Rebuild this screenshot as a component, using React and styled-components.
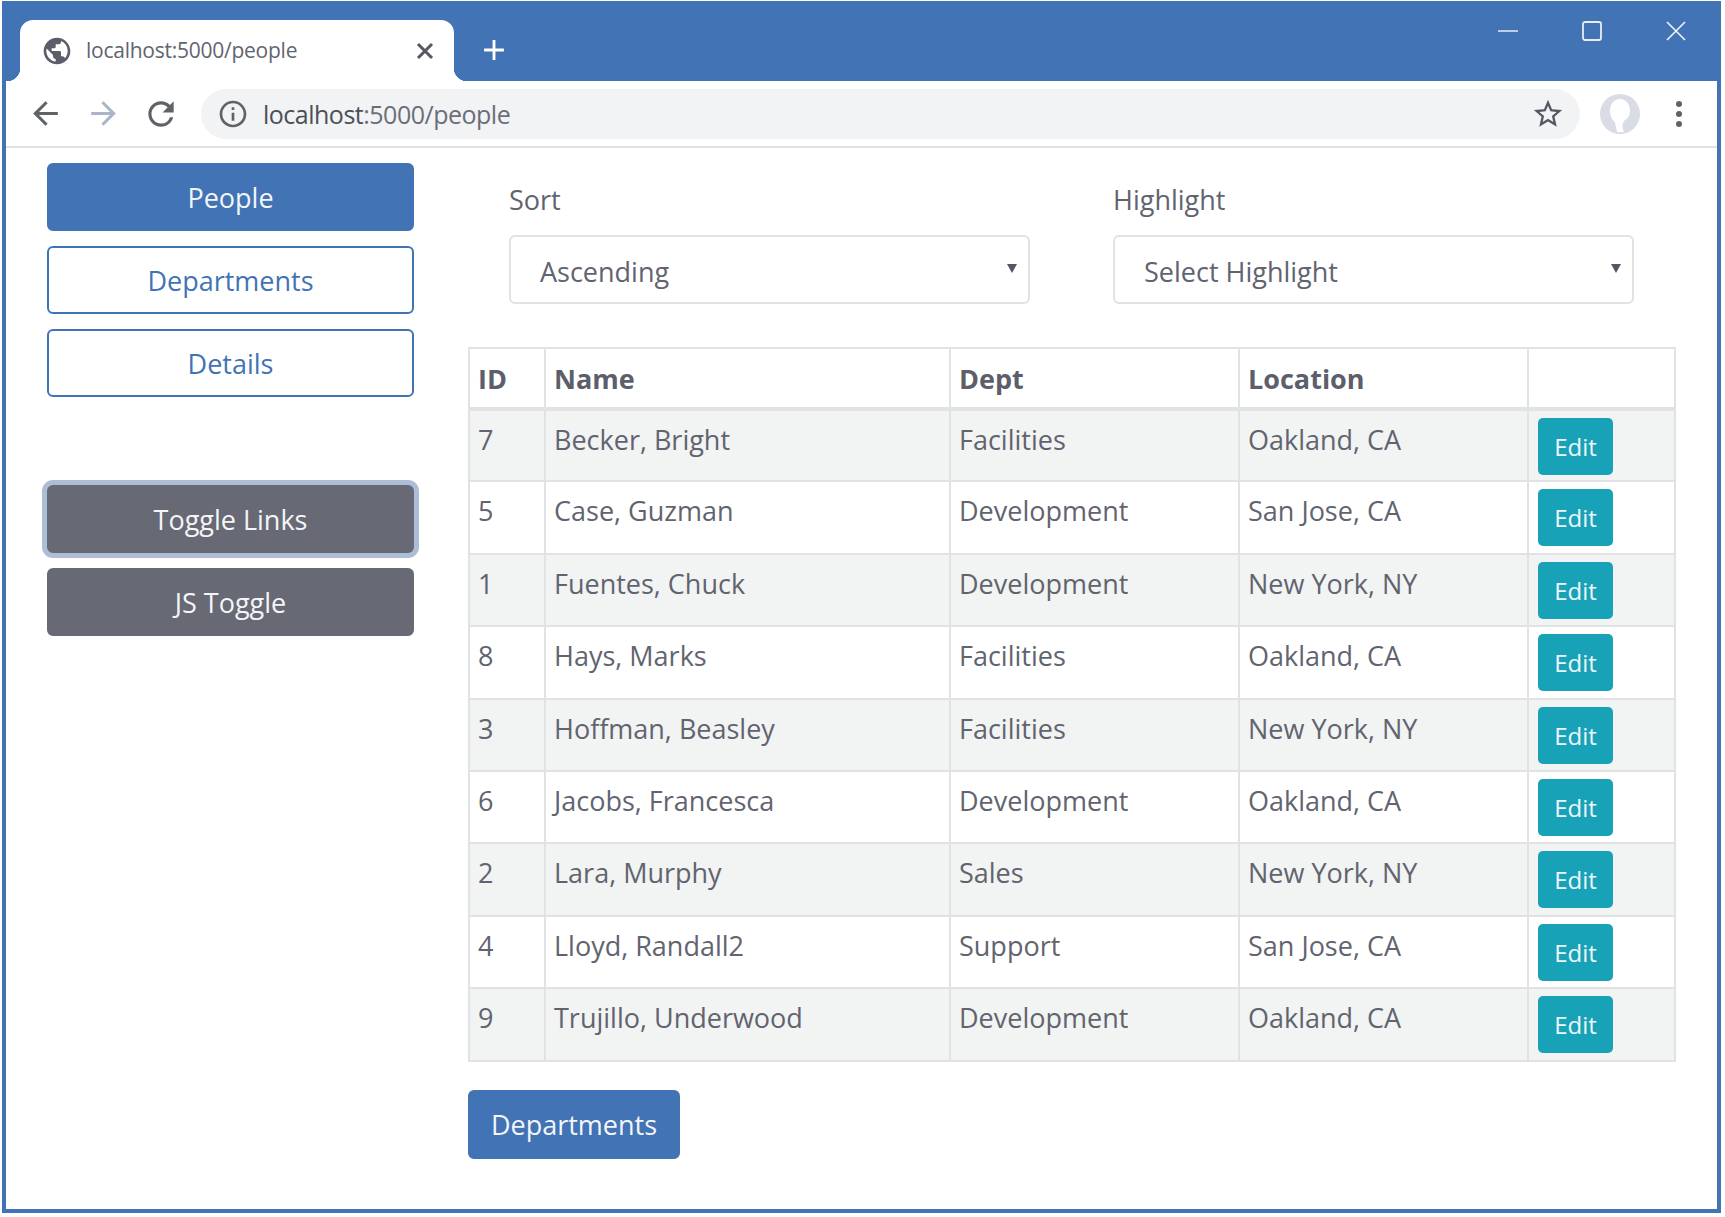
import React from "react";
import styled, { createGlobalStyle } from "styled-components";

const BLUE = "#4173b5";
const TEXT = "#61646f";
const LINE = "#e0e2e3";

const people = [
  { id: 7, name: "Becker, Bright", dept: "Facilities", location: "Oakland, CA" },
  { id: 5, name: "Case, Guzman", dept: "Development", location: "San Jose, CA" },
  { id: 1, name: "Fuentes, Chuck", dept: "Development", location: "New York, NY" },
  { id: 8, name: "Hays, Marks", dept: "Facilities", location: "Oakland, CA" },
  { id: 3, name: "Hoffman, Beasley", dept: "Facilities", location: "New York, NY" },
  { id: 6, name: "Jacobs, Francesca", dept: "Development", location: "Oakland, CA" },
  { id: 2, name: "Lara, Murphy", dept: "Sales", location: "New York, NY" },
  { id: 4, name: "Lloyd, Randall2", dept: "Support", location: "San Jose, CA" },
  { id: 9, name: "Trujillo, Underwood", dept: "Development", location: "Oakland, CA" },
];

const GlobalStyle = createGlobalStyle`
  html, body {
    margin: 0;
    padding: 0;
    background: #fff;
  }
  body {
    font-family: "Open Sans", "Liberation Sans", sans-serif;
    color: ${TEXT};
  }
`;

const Window = styled.div`
  box-sizing: border-box;
  width: 1719px;
  height: 1212px;
  margin: 1px 0 0 2px;
  border: 4px solid ${BLUE};
  display: flex;
  flex-direction: column;
  background: #fff;
`;

const TabBar = styled.div`
  height: 76px;
  flex: none;
  background: ${BLUE};
  display: flex;
  align-items: flex-start;
  padding: 15px 0 0 14px;
  box-sizing: border-box;
`;

const Tab = styled.div`
  position: relative;
  width: 434px;
  height: 61px;
  background: #fff;
  border-radius: 13px 13px 0 0;
  display: flex;
  align-items: center;
  box-sizing: border-box;
  padding: 0 19px 0 21px;
  font-size: 21px;
  letter-spacing: -0.25px;
  color: ${TEXT};

  &::before,
  &::after {
    content: "";
    position: absolute;
    bottom: 0;
    width: 13px;
    height: 13px;
  }
  &::before {
    left: -13px;
    background: radial-gradient(circle at 0 0, transparent 13px, #fff 13.5px);
  }
  &::after {
    right: -13px;
    background: radial-gradient(circle at 100% 0, transparent 13px, #fff 13.5px);
  }
`;

const TabTitle = styled.span`
  flex: 1;
  margin-left: 13px;
  margin-top: -1px;
  white-space: nowrap;
`;

const NewTab = styled.div`
  margin: 19px 0 0 29px;
  display: flex;
`;

const WindowControls = styled.div`
  margin-left: auto;
  display: flex;
  align-items: center;
  gap: 64px;
  padding: 0 31px 0 0;
  margin-top: 1px;
`;

const Toolbar = styled.div`
  height: 67px;
  flex: none;
  box-sizing: border-box;
  border-bottom: 2px solid ${LINE};
  display: flex;
  align-items: center;
  padding: 0 19px 0 10px;
`;

const NavSlot = styled.div`
  width: ${(p) => p.$width || 58}px;
  display: flex;
  justify-content: center;
  flex: none;
`;

const Omnibox = styled.div`
  flex: 1;
  height: 50px;
  margin-left: 11px;
  border-radius: 25px;
  background: #f1f3f4;
  display: flex;
  align-items: center;
  padding: 0 15px 0 16px;
  font-size: 25px;
  letter-spacing: -0.5px;
`;

const UrlText = styled.span`
  margin-left: 14px;
  flex: 1;
  color: #6b6e78;
  b {
    font-weight: 400;
    color: #4c4f5a;
  }
`;

const Page = styled.div`
  flex: 1;
  display: flex;
  align-items: flex-start;
`;

const Sidebar = styled.nav`
  width: 367px;
  flex: none;
  margin-left: 41px;
  padding-top: 15px;
  display: flex;
  flex-direction: column;
  gap: 15px;
`;

const ActionButton = styled.button`
  box-sizing: border-box;
  height: ${(p) => (p.$auto ? 69 : 68)}px;
  width: ${(p) => (p.$auto ? "212px" : "100%")};
  border-radius: 6px;
  font-family: inherit;
  font-size: 27px;
  padding: 0;
  cursor: pointer;
  border: 2px solid ${(p) => (p.$kind === "gray" ? "#676975" : BLUE)};
  background: ${(p) =>
    p.$kind === "gray" ? "#676975" : p.$kind === "outline" ? "#fff" : BLUE};
  color: ${(p) => (p.$kind === "outline" ? BLUE : "#f4f5f7")};
  box-shadow: ${(p) => (p.$focused ? "0 0 0 5px #aebdd6" : "none")};
`;

const ToggleGroup = styled.div`
  margin-top: 73px;
  display: flex;
  flex-direction: column;
  gap: 15px;
`;

const Main = styled.main`
  width: 1206px;
  flex: none;
  margin-left: 54px;
  padding-top: 32px;
`;

const Filters = styled.div`
  display: flex;
  gap: 83px;
  padding-left: 41px;
`;

const Field = styled.div`
  width: 521px;
`;

const FieldLabel = styled.label`
  display: block;
  font-size: 27px;
  line-height: 39px;
  margin-bottom: 16px;
`;

const SelectWrap = styled.div`
  position: relative;

  &::after {
    content: "";
    position: absolute;
    right: 13px;
    top: 29px;
    border-left: 5px solid transparent;
    border-right: 5px solid transparent;
    border-top: 9px solid #555864;
    pointer-events: none;
  }
`;

const Select = styled.select`
  appearance: none;
  width: 100%;
  height: 69px;
  box-sizing: border-box;
  border: 2px solid ${LINE};
  border-radius: 6px;
  background: #fff;
  color: ${TEXT};
  font-family: inherit;
  font-size: 27px;
  padding: 3px 0 0 29px;
`;

const Table = styled.table`
  width: 1206px;
  table-layout: fixed;
  border-collapse: collapse;
  margin: 43px 0 28px;
  font-size: 27px;
`;

const HeadCell = styled.th`
  height: 61px;
  box-sizing: border-box;
  border: 2px solid ${LINE};
  border-bottom-width: 4px;
  text-align: left;
  padding: 0 8px;
  font-weight: 700;
  color: #5c5f6b;
`;

const Row = styled.tr`
  background: ${(p) => (p.$striped ? "#f2f3f3" : "#fff")};
`;

const Cell = styled.td`
  height: 72.4px;
  box-sizing: border-box;
  border: 2px solid ${LINE};
  padding: 9px 8px 0;
  line-height: 39px;
  vertical-align: top;
  white-space: nowrap;
`;

const ButtonCell = styled(Cell)`
  padding: 7px 9px 0;
`;

const EditButton = styled.button`
  display: block;
  width: 75px;
  height: 57px;
  border: 0;
  border-radius: 5px;
  background: #18a2b8;
  color: #eef6f8;
  font-family: inherit;
  font-size: 24px;
  padding: 0;
`;

const Icon = ({ d, size = 24, color = "#5f6368" }) => (
  <svg width={size} height={size} viewBox="0 0 24 24" fill={color}>
    <path d={d} />
  </svg>
);

const Glyph = ({ size, color, width = 2, children }) => (
  <svg
    width={size}
    height={size}
    viewBox="0 0 20 20"
    fill="none"
    stroke={color}
    strokeWidth={width}
  >
    {children}
  </svg>
);

const Profile = () => (
  <svg width="42" height="42" viewBox="0 0 42 42">
    <circle cx="21" cy="21" r="20" fill="#d9dce4" />
    <path
      d="M21 6c-6 0-10 5-10 12 0 5 2 9 5 11l2 10h7c-2-4-2-8 0-11 3-2 6-5 6-10 0-7-4-12-10-12z"
      fill="#fff"
    />
  </svg>
);

const Kebab = () => (
  <svg width="8" height="28" viewBox="0 0 8 28" fill="#5f6368">
    <circle cx="4" cy="4" r="3" />
    <circle cx="4" cy="14" r="3" />
    <circle cx="4" cy="24" r="3" />
  </svg>
);

const paths = {
  globe:
    "M12 2C6.48 2 2 6.48 2 12s4.48 10 10 10 10-4.48 10-10S17.52 2 12 2zm-1 17.93c-3.95-.49-7-3.85-7-7.93 0-.62.08-1.21.21-1.79L9 15v1c0 1.1.9 2 2 2v1.93zm6.9-2.54c-.26-.81-1-1.39-1.9-1.39h-1v-3c0-.55-.45-1-1-1H8v-2h2c.55 0 1-.45 1-1V7h2c1.1 0 2-.9 2-2v-.41c2.93 1.19 5 4.06 5 7.41 0 2.08-.8 3.97-2.1 5.39z",
  back: "M20 11H7.8l5.6-5.6L12 4l-8 8 8 8 1.4-1.4L7.8 13H20z",
  forward: "M12 4l-1.4 1.4L16.2 11H4v2h12.2l-5.6 5.6L12 20l8-8z",
  reload:
    "M17.65 6.35A7.958 7.958 0 0 0 12 4c-4.42 0-7.99 3.58-7.99 8s3.57 8 7.99 8c3.73 0 6.84-2.55 7.73-6h-2.08A5.99 5.99 0 0 1 12 18c-3.31 0-6-2.69-6-6s2.69-6 6-6c1.66 0 3.14.69 4.22 1.78L13 11h7V4l-2.35 2.35z",
  info: "M11 7h2v2h-2zm0 4h2v6h-2zm1-9C6.48 2 2 6.48 2 12s4.48 10 10 10 10-4.48 10-10S17.52 2 12 2zm0 18c-4.41 0-8-3.59-8-8s3.59-8 8-8 8 3.59 8 8-3.59 8-8 8z",
  star: "M22 9.24l-7.19-.62L12 2 9.19 8.63 2 9.24l5.46 4.73L5.82 21 12 17.27 18.18 21l-1.63-7.03L22 9.24zM12 15.4l-3.76 2.27 1-4.28-3.32-2.88 4.38-.38L12 6.1l1.71 4.04 4.38.38-3.32 2.88 1 4.28L12 15.4z",
};

export default function App() {
  return (
    <>
      <GlobalStyle />
      <Window>
        <TabBar>
          <Tab>
            <Icon d={paths.globe} size={32} color="#5b5e69" />
            <TabTitle>localhost:5000/people</TabTitle>
            <Glyph size={20} color="#55585f" width={3}>
              <path d="M3 3l14 14M17 3L3 17" />
            </Glyph>
          </Tab>
          <NewTab>
            <Glyph size={22} color="#fff" width={2.6}>
              <path d="M10 1v18M1 10h18" />
            </Glyph>
          </NewTab>
          <WindowControls>
            <Glyph size={20} color="#e8edf5" width={1.5}>
              <path d="M0 10h20" />
            </Glyph>
            <Glyph size={20} color="#e8edf5" width={1.8}>
              <rect x="1" y="1" width="18" height="18" rx="2" />
            </Glyph>
            <Glyph size={20} color="#f2f4f8" width={1.6}>
              <path d="M1 1l18 18M19 1L1 19" />
            </Glyph>
          </WindowControls>
        </TabBar>

        <Toolbar>
          <NavSlot>
            <Icon d={paths.back} size={37} />
          </NavSlot>
          <NavSlot>
            <Icon d={paths.forward} size={37} color="#a9b5c9" />
          </NavSlot>
          <NavSlot>
            <Icon d={paths.reload} size={38} />
          </NavSlot>
          <Omnibox>
            <Icon d={paths.info} size={32} />
            <UrlText>
              <b>localhost</b>:5000/people
            </UrlText>
            <Icon d={paths.star} size={34} color="#555862" />
          </Omnibox>
          <NavSlot $width={80}>
            <Profile />
          </NavSlot>
          <NavSlot $width={38}>
            <Kebab />
          </NavSlot>
        </Toolbar>

        <Page>
          <Sidebar>
            <ActionButton>People</ActionButton>
            <ActionButton $kind="outline">Departments</ActionButton>
            <ActionButton $kind="outline">Details</ActionButton>
            <ToggleGroup>
              <ActionButton $kind="gray" $focused>
                Toggle Links
              </ActionButton>
              <ActionButton $kind="gray">JS Toggle</ActionButton>
            </ToggleGroup>
          </Sidebar>

          <Main>
            <Filters>
              <Field>
                <FieldLabel>Sort</FieldLabel>
                <SelectWrap>
                  <Select defaultValue="Ascending">
                    <option>Ascending</option>
                    <option>Descending</option>
                  </Select>
                </SelectWrap>
              </Field>
              <Field>
                <FieldLabel>Highlight</FieldLabel>
                <SelectWrap>
                  <Select defaultValue="Select Highlight">
                    <option>Select Highlight</option>
                  </Select>
                </SelectWrap>
              </Field>
            </Filters>

            <Table>
              <colgroup>
                <col width="76" />
                <col width="405" />
                <col width="289" />
                <col width="289" />
                <col width="147" />
              </colgroup>
              <thead>
                <tr>
                  <HeadCell>ID</HeadCell>
                  <HeadCell>Name</HeadCell>
                  <HeadCell>Dept</HeadCell>
                  <HeadCell>Location</HeadCell>
                  <HeadCell />
                </tr>
              </thead>
              <tbody>
                {people.map((p, i) => (
                  <Row key={p.id} $striped={i % 2 === 0}>
                    <Cell>{p.id}</Cell>
                    <Cell>{p.name}</Cell>
                    <Cell>{p.dept}</Cell>
                    <Cell>{p.location}</Cell>
                    <ButtonCell>
                      <EditButton>Edit</EditButton>
                    </ButtonCell>
                  </Row>
                ))}
              </tbody>
            </Table>

            <ActionButton $auto>Departments</ActionButton>
          </Main>
        </Page>
      </Window>
    </>
  );
}
